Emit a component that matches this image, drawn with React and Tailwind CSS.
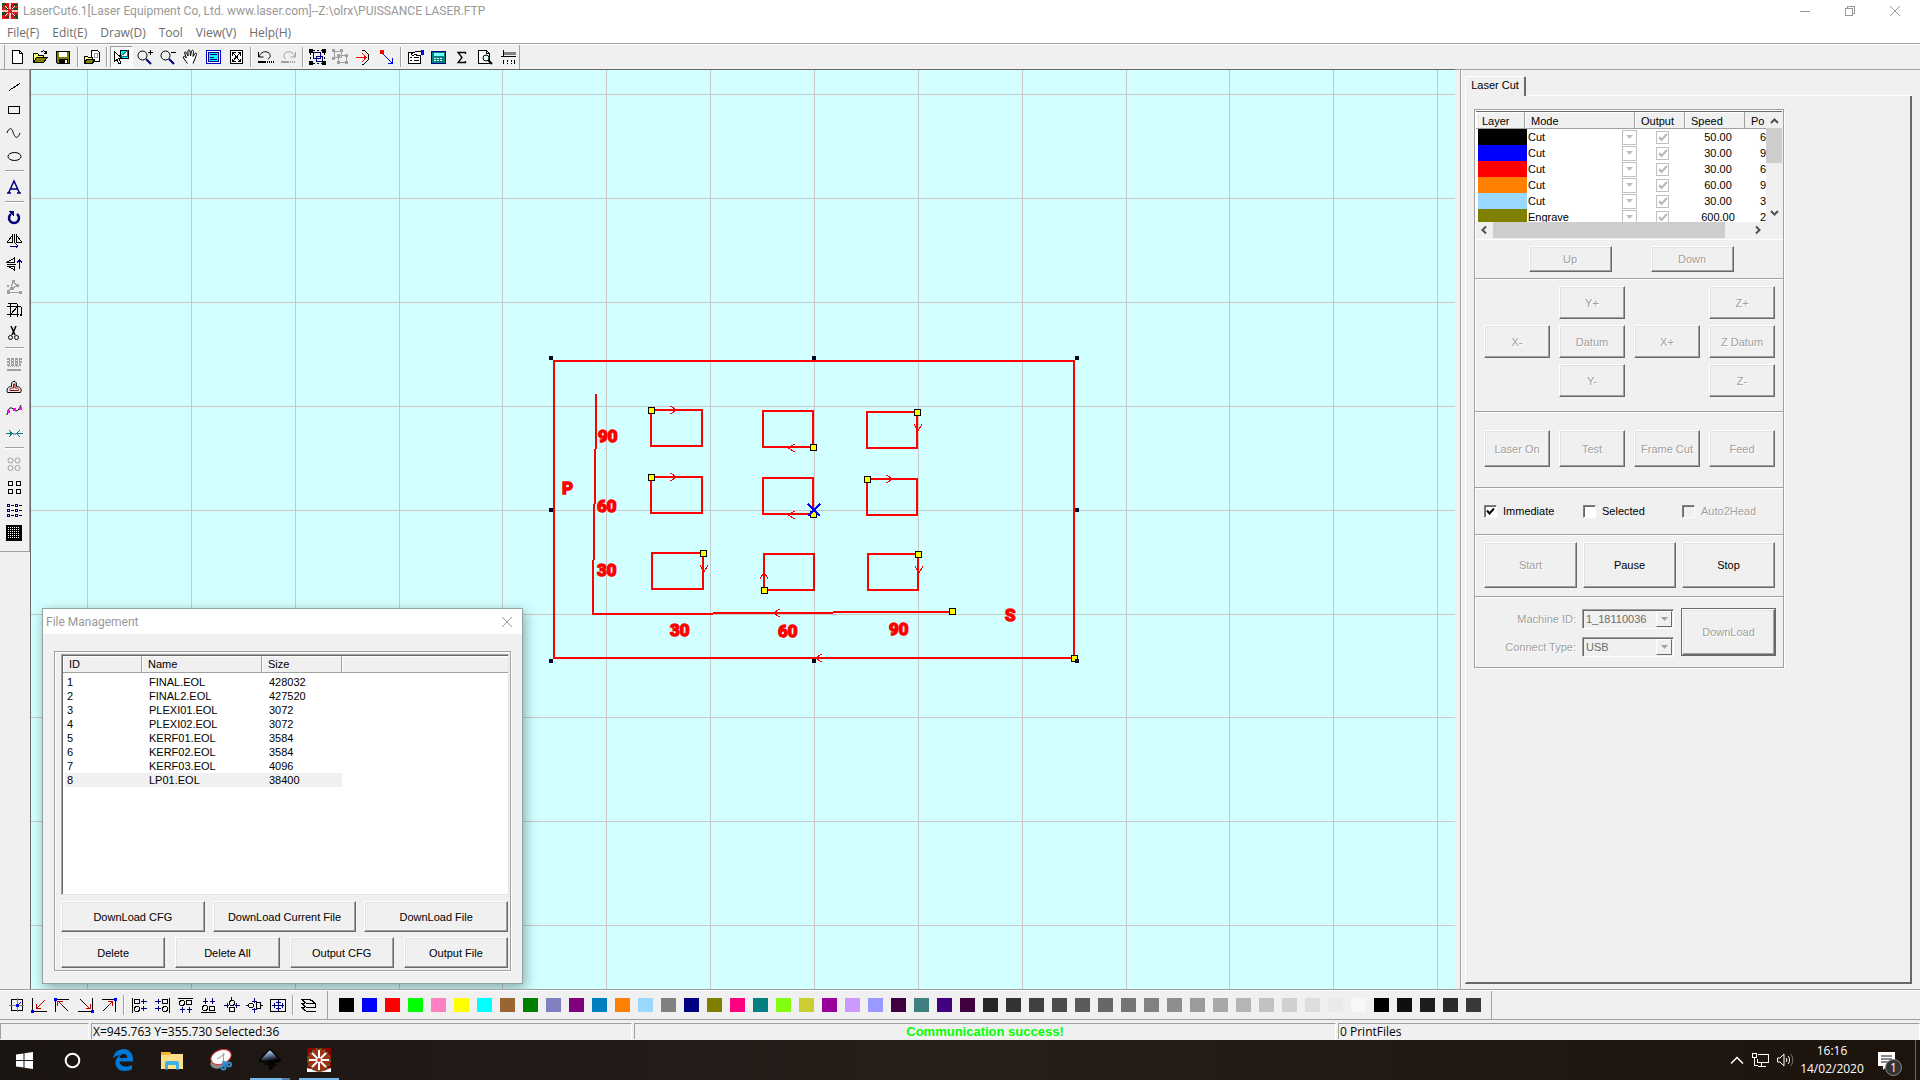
import React, { useState } from "react";

const NAVY = "#000080";
const GREY = "#a0a0a0";

const UI = "font-['Open_Sans','Noto_Sans',sans-serif]";
const CAPTION = "font-[Roboto,'Open_Sans',sans-serif]";
const BTN =
  "flex items-center justify-center border border-t-white border-l-white border-r-[#696969] border-b-[#696969] bg-[#f0f0f0] shadow-[inset_-1px_-1px_#a0a0a0,inset_1px_1px_#e3e3e3] disabled:text-[#a0a0a0] disabled:text-shadow-[1px_1px_#fff]";

function Icon({ children, w = 17, h = 16 }) {
  return (
    <svg width={w} height={h} viewBox={`0 0 ${w} ${h}`} fill="none" stroke="#000" shapeRendering="crispEdges" aria-hidden="true">
      {children}
    </svg>
  );
}

const GLASS = (
  <>
    <circle cx="6.500" cy="6.500" r="4.500" shapeRendering="auto" />
    <path d="M10 10l5 5" stroke={NAVY} strokeWidth="2" shapeRendering="auto" />
  </>
);

const FOLDER = (
  <>
    <path d="M1.500 13.500v-9h4l1 1.500h5v2" fill="#ffff66" />
    <path d="M1.500 13.500l3-5.500h11l-4 5.500z" fill="#808000" />
  </>
);

const FILE_TOOLS = [
  ["New", <path d="M3.500 1.500h7l3 3v10h-10zM10.500 1.500v3h3" fill="#fff" />],
  ["Open", <>{FOLDER}<path d="M9 3c2-2 4-1 5 1M14.500 1.500v3h-3" /></>],
  ["Save", <><path d="M1.500 2.500h13v12h-12l-1-1z" fill="#808000" /><path d="M4 3h8v5H4z" fill="#fff" stroke="none" /><path d="M4 10h9v4H4z" fill="#000" stroke="none" /><path d="M10 11h2v3h-2z" fill="#fff" stroke="none" /></>],
  null,
  ["Import", <><path d="M7.500 1.500h6l2 2v9h-8z" fill="#fff" /><rect x="10.500" y="4.500" width="3" height="4" stroke={GREY} /><path d="M.5 14.500v-7h3l1 1h4v2" fill="#ffff66" /><path d="M.5 14.500l2-4h8l-2 4z" fill="#808000" /></>],
  null,
  ["Pick", <><path d="M7.500 1.500h8v8h-8z" fill="#00ffff" /><path d="M8 7l6-5v5z" fill="#fff" stroke="#008080" /><path d="M1.500 2.500v10l2.500-2 2 4.500 2-1-2-4.500h3z" fill="#fff" /></>],
  ["Zoom in", <>{GLASS}<path d="M14.500 1v5M12 3.500h5" /></>],
  ["Zoom out", <>{GLASS}<path d="M12 3.500h5" /></>],
  ["Pan", <path d="M5.500 14.500l-4-5.500c-1-2 1-2 2-1l1 1-2-5c0-1.500 1.500-1.500 2 0l1.500 3v-5c0-1.500 2-1.500 2 0l.5 5 1-5c.5-1 2-1 2 .5l-.5 5 2-3c1-1 2 0 1.500 1l-2 5.500-1.500 3.500" fill="#fff" shapeRendering="auto" />],
  ["Table view", <><rect x="1.500" y="1.500" width="14" height="13" fill="#fff" stroke="#0000c0" /><rect x="3.500" y="3.500" width="10" height="9" fill="#00ffff" stroke={NAVY} /><path d="M5 5.500h7M5 8.500h4M5 10.500h7" stroke={NAVY} /></>],
  ["Fit to page", <><rect x="2.500" y="1.500" width="12" height="13" fill="#fff" /><path d="M5 4l7 8M12 4l-7 8M4.500 6.500v-3h3M9.500 3.500h3v3M4.500 9.500v3h3M12.500 9.500v3h-3" /></>],
  null,
  ["Undo", <><path d="M1.500 3v5h5M2 8c1-4 5-6 8-5 4 1 4 6 1 7" shapeRendering="auto" /><path d="M1 13h8" strokeWidth="2" /><path d="M10 13h7" strokeWidth="2" strokeDasharray="1 1" /></>],
  ["Redo", <g stroke={GREY}><path d="M15.500 3v5h-5M15 8c-1-4-5-6-8-5-4 1-4 6-1 7" shapeRendering="auto" /><path d="M1 13h8" strokeWidth="2" /><path d="M10 13h6" strokeWidth="2" strokeDasharray="1 1" /></g>],
  null,
  ["Group", <><path d="M4.500 3.500h7v6h-7zM7.500 7.500h6v5h-6z" stroke={NAVY} /><path d="M4 1.500h9M15.500 4v8M4 14.500h9M1.500 4v8" strokeDasharray="2 2" /><path d="M0 0h4v4H0zM13 0h4v4h-4zM0 12h4v4H0zM13 12h4v4h-4z" fill="#000" stroke="none" /></>],
  ["Ungroup", <><path d="M2.500 2.500h7v6h-7zM6.500 6.500h8v7h-8z" stroke={GREY} /><path d="M0 0h3v3H0zM8 0h3v3H8zM0 8h3v3H0zM5 5h3v3H5zM13 5h3v3h-3zM5 12h3v3H5zM13 12h3v3h-3z" fill={GREY} stroke="none" /></>],
  ["Direction", <><path d="M7 1h2l4 4v6l-4 4H7" /><path d="M1 8.500h10M7 4l4 4.500L7 13" stroke="#f00" /></>],
  ["Start point", <><path d="M2 1h4v4H2z" fill="#f00" stroke="none" /><path d="M5 5l9 9M14.500 9v5h-5" stroke="#00f" /></>],
  null,
  ["Properties", <><path d="M1.500 3.500h12v11h-12z" fill="#fff" /><path d="M3 8.500h2M7 8.500h5M3 11.500h2M7 11.500h5" /><path d="M4 5l6-3 4 1v3l-3 1-3-2-2 2z" fill="#fff" /><path d="M14 1h3v5h-3z" fill="#00f" stroke="none" /></>],
  ["Calculator", <><rect x="1.500" y="2.500" width="14" height="12" rx="1" fill="#008080" stroke={NAVY} /><path d="M4 4h10v3H4z" fill="#7ff" stroke="none" /><path d="M4 9.500h9M4 11.500h9" stroke="#fff" strokeDasharray="2 1" /></>],
  ["Sum", <path d="M12.500 5V3.500H5l4 5-4 5h7.500V12" strokeWidth="1.300" shapeRendering="auto" />],
  ["Preview", <><path d="M2.500 1.500h8l3 3v10h-11z" fill="#fff" /><path d="M10.500 1.500v3h3" /><circle cx="10" cy="9" r="3" fill="#dff" shapeRendering="auto" /><path d="M12 11l4 4" strokeWidth="2" shapeRendering="auto" /></>],
  ["Plotter", <><path d="M4 3h13v3H4z" fill="#808080" stroke="none" /><path d="M4.500 1v7M2 7.500h15" /><path d="M4.500 11v4M8.500 11v2M8.500 14v1M12.500 11v2M12.500 14v1M15.500 11v4" /></>],
];

const DRAW_TOOLS = [
  ["Line", <path d="M3 11.500l11-7" />],
  ["Rectangle", <rect x="2.500" y="4.500" width="11" height="7" />],
  ["Curve", <path d="M1 8c2-6 5-5 6-1s4 9 7 1" shapeRendering="auto" />],
  ["Ellipse", <ellipse cx="8.500" cy="8.500" rx="6.500" ry="4" shapeRendering="auto" />],
  null,
  ["Text", <path d="M2.500 14L8 2l5.500 12M4.500 10h7M1 14h4M11 14h4" stroke={NAVY} strokeWidth="1.500" shapeRendering="auto" />],
  null,
  ["Rotate", <><path d="M11 4a5 5 0 1 1-6 0" stroke={NAVY} strokeWidth="2.500" shapeRendering="auto" /><path d="M2 1h6v6z" fill={NAVY} stroke="none" /></>],
  ["Mirror horizontal", <><path d="M6.500 2v7h-5zM10.500 2v7h5zM8.500 1v9" /><path d="M4 13h8M9.500 10.500L12 13l-2.500 2.500" stroke={NAVY} /></>],
  ["Mirror vertical", <><path d="M8.500 2v4h-7zM8.500 14v-4h-7zM1 8.500h9" /><path d="M13.500 13V4M11 6.500L13.500 4 16 6.500" stroke={NAVY} /></>],
  ["Edit nodes", <><path d="M3 13.500h12M3 13l4-10M7 3l4 3-5 4" stroke={GREY} /><path d="M1 11h3v4H1zM6 1h3v3H6zM10 5h3v3h-3zM13 12h3v3h-3zM5 8h3v3H5zM1 6h2v2H1z" fill={GREY} stroke="none" /></>],
  ["Size", <><rect x="4.500" y="4.500" width="7" height="8" /><path d="M1 4.500h14M4.500 1v14M11.500 2v13M1 12.500h12M5 12l7-8M2 1.500h9M15.500 5v9M14 12l1.500 2" /></>],
  ["Cut", <><path d="M5 1l4 9M10 1L6 10" strokeWidth="1.500" shapeRendering="auto" /><circle cx="4.500" cy="12.500" r="2" shapeRendering="auto" /><circle cx="10.500" cy="12.500" r="2" shapeRendering="auto" /></>],
  null,
  ["Fill", <><path d="M1 3h15M1 6h15M1 9h14" stroke={GREY} strokeWidth="2" strokeDasharray="3 1" /><path d="M3 4.500h12M3 7.500h12M2 10.500h12" stroke={GREY} strokeDasharray="1 1" /><path d="M1 14h14" stroke={GREY} strokeWidth="2" /></>],
  ["Offset", <g shapeRendering="auto"><path d="M1.500 13.500c-1.500-4 1-6 4-6-1-7 6-7 5 0 3 0 6 2 4 6z" /><path d="M4 11.500c-1-2 1-2.500 3.500-2.500V5h1.500v4c2.500 0 4.500.5 3.500 2.500z" stroke="#a00000" /></g>],
  ["Smooth", <><path d="M1 13c1-6 3-9 6-6s5 3 8-4" shapeRendering="auto" /><path d="M1 8h3v3H1zM7 6h3v3H7zM13 5h3v3h-3z" fill="#f0f" stroke="none" /></>],
  ["Join", <g stroke="#008080"><path d="M0 8.500h6M3 5l3 3.500L3 12M11 8.500h6M14 5l-3 3.500 3 3.500" /><path d="M7 8.500h3" stroke={GREY} strokeWidth="2" /></g>],
  null,
  ["Array circle", <g stroke={GREY} shapeRendering="auto"><circle cx="4.500" cy="4.500" r="2.500" /><circle cx="11.500" cy="4.500" r="2.500" /><circle cx="4.500" cy="12" r="2.500" /><circle cx="11.500" cy="12" r="2.500" /></g>],
  ["Array", <path d="M2.500 2.500h4v4h-4zM10.500 2.500h4v4h-4zM2.500 10.500h4v4h-4zM10.500 10.500h4v4h-4z" />],
  ["List", <><path d="M1.500 2.500h2v2h-2zM9.500 2.500h2v2h-2zM1.500 7.500h2v2h-2zM9.500 7.500h2v2h-2zM1.500 12.500h2v2h-2zM9.500 12.500h2v2h-2z" stroke={NAVY} /><path d="M5 3.500h3M13 3.500h3M5 8.500h3M13 8.500h3M5 13.500h3M13 13.500h3" /></>],
  ["Grid", <><path d="M0 0h16v16H0z" fill="#000" stroke="none" /><path d="M2 2.500h12M2 4.500h12M2 6.500h12M2 8.500h12M2 10.500h12M2 12.500h12" stroke="#fff" strokeDasharray="1 1" /></>],
];

const ALIGN_TOOLS = [
  ["Page centre", <><path d="M3.500 2.500h11v11h-11z" /><path d="M1 8.500h15M9.500 1v14" stroke="#808080" /><path d="M9 9l4-4" stroke="#00f" /><path d="M8 7h3v3H8z" fill="#00f" stroke="none" /></>],
  ["Bottom left", <><path d="M1.500 1v13.500H16" /><path d="M14 3L6 11M5.500 7v4.500H10" stroke="#c00000" /><path d="M0 13h3v3H0z" fill="#00f" stroke="none" /></>],
  ["Top left", <><path d="M1.500 15V2.500H15M6 6l8 8" /><path d="M4 4l4 4M3.500 9V4.500H9" stroke="#c00000" /><path d="M0 1h3v3H0z" fill="#00f" stroke="none" /></>],
  ["Bottom right", <><path d="M15.500 1v13.500H1M3 2l9 9" /><path d="M9 8l4 4M13.500 7v4.500H9" stroke="#c00000" /><path d="M14 13h3v3h-3z" fill="#00f" stroke="none" /></>],
  ["Top right", <><path d="M15.500 15V2.500H2M3 14l9-9" /><path d="M9 8l4-4M8 4.500h4.500V9" stroke="#c00000" /><path d="M14 1h3v3h-3z" fill="#00f" stroke="none" /></>],
  null,
  ["Align left", <><path d="M1.500 1v15M3.500 2.500h5v4h-5z" /><circle cx="6" cy="12" r="2.500" /><path d="M10 4.500h6M10 11.500h6M12.500 2v5M12.500 9v5" stroke={NAVY} /></>],
  ["Align right", <><path d="M15.500 1v15M8.500 2.500h5v4h-5z" /><circle cx="11" cy="12" r="2.500" /><path d="M1 4.500h6M1 11.500h6M4.500 2v5M4.500 9v5" stroke={NAVY} /></>],
  ["Align top", <><path d="M1 1.500h15M9.500 3.500h5v4h-5z" /><circle cx="5" cy="6" r="2.500" /><path d="M5.500 10v6M12.500 10v6M3 12.500h5M10 12.500h5" stroke={NAVY} /></>],
  ["Align bottom", <><path d="M1 15.500h15M9.500 9.500h5v4h-5z" /><circle cx="5" cy="11" r="2.500" /><path d="M5.500 1v6M12.500 1v6M3 4.500h5M10 4.500h5" stroke={NAVY} /></>],
  ["Centre vertical", <><path d="M6.500 10.500h5v4h-5zM8.500 0v3" /><circle cx="9" cy="6" r="2.500" /><path d="M1 8.500h5M12 8.500h5M4 6v5M13.500 6v5" stroke={NAVY} /></>],
  ["Centre horizontal", <><path d="M10.500 5.500h4v6h-4zM15 8.500h2M0 8.500h2" /><circle cx="5" cy="8.500" r="2.500" /><path d="M8.500 1v5M8.500 11v5M6 4.500h5M6 12.500h5" stroke={NAVY} /></>],
  ["Centre both", <><path d="M1.500 2.500h15v12h-15z" /><path d="M3 8.500h12M9.500 3v11M5 6v5M13.500 6v5M7 5.500h5M7 11.500h5" stroke={NAVY} /></>],
  null,
  ["Layers", <path d="M1.500 2.500h9l5 4h-9zM1.500 6.500l5 4h9M1.500 10.500l5 4h9M1.500 6.500h3M1.500 10.500h3M15.500 7v4M10 2.500l5 4" />],
];

const PALETTE = [
  "#000000", "#0000ff", "#ff0000", "#00ff00", "#ff80c0", "#ffff00", "#00ffff", "#996633", "#008000", "#8080c0",
  "#800080", "#0080c0", "#ff8000", "#99d9ff", "#808080", "#000080", "#808000", "#ff0080", "#008080", "#80ff11",
  "#cccc33", "#990099", "#cc99ff", "#9999ff", "#400040", "#408080", "#400080", "#400040", "#262626", "#333333",
  "#404040", "#4d4d4d", "#5a5a5a", "#676767", "#747474", "#818181", "#8e8e8e", "#9b9b9b", "#a8a8a8", "#b5b5b5",
  "#c2c2c2", "#d0d0d0", "#dddddd", "#eaeaea", "#f7f7f7", "#000000", "#0f0f0f", "#1d1d1d", "#2b2b2b", "#393939",
];

const LAYERS = [
  { color: "#000000", mode: "Cut", speed: "50.00", power: "6" },
  { color: "#0000ff", mode: "Cut", speed: "30.00", power: "9" },
  { color: "#ff0000", mode: "Cut", speed: "30.00", power: "6" },
  { color: "#ff8000", mode: "Cut", speed: "60.00", power: "9" },
  { color: "#99d9ff", mode: "Cut", speed: "30.00", power: "3" },
  { color: "#808000", mode: "Engrave", speed: "600.00", power: "2" },
];

const FILES = [
  ["FINAL.EOL", "428032"],
  ["FINAL2.EOL", "427520"],
  ["PLEXI01.EOL", "3072"],
  ["PLEXI02.EOL", "3072"],
  ["KERF01.EOL", "3584"],
  ["KERF02.EOL", "3584"],
  ["KERF03.EOL", "4096"],
  ["LP01.EOL", "38400"],
];

// x, y, width, height, start marker, arrow tip, arrow direction
const BOXES = [
  { x: 651, y: 410, w: 51, h: 36, start: [651, 410], tip: [677, 410], dir: 0 },
  { x: 763, y: 411, w: 50, h: 36, start: [813, 447], tip: [788, 448], dir: 180 },
  { x: 867, y: 412, w: 50, h: 36, start: [917, 412], tip: [918, 431], dir: 90 },
  { x: 651, y: 477, w: 51, h: 36, start: [651, 477], tip: [677, 477], dir: 0 },
  { x: 763, y: 478, w: 50, h: 36, start: [813, 514], tip: [788, 515], dir: 180 },
  { x: 867, y: 479, w: 50, h: 36, start: [867, 479], tip: [893, 479], dir: 0 },
  { x: 652, y: 553, w: 51, h: 36, start: [703, 553], tip: [704, 572], dir: 90 },
  { x: 764, y: 554, w: 50, h: 36, start: [764, 590], tip: [764, 572], dir: 270 },
  { x: 868, y: 554, w: 50, h: 36, start: [918, 554], tip: [919, 573], dir: 90 },
];

const LABELS = [
  ["90", 598, 442], ["60", 597, 512], ["30", 597, 576], ["P", 562, 494],
  ["30", 670, 636], ["60", 778, 637], ["90", 889, 635], ["S", 1005, 621],
];

const HANDLES = [
  [551, 358], [814, 358], [1077, 358], [551, 510], [1077, 510], [551, 661], [814, 661], [1077, 661],
];

const Arrow = ({ x, y, dir }) => (
  <path d="M-7-4L0 0L-7 4" strokeWidth="1" transform={`translate(${x} ${y}) rotate(${dir})`} />
);

const Marker = ({ x, y }) => (
  <rect x={x - 2.5} y={y - 2.5} width="6" height="6" fill="#ff0" stroke="#000" strokeWidth="1" />
);

function Drawing() {
  const lines = Array.from({ length: 30 }, (_, i) => i);
  return (
    <svg className="absolute inset-0 h-full w-full" fill="none" shapeRendering="crispEdges" role="img" aria-label="Drawing">
      <g transform="translate(-31 -70)">
        <g stroke="#c8c8c8">
          {lines.map((i) => (
            <path key={i} d={`M${Math.round(87 + i * 103.85) + 0.5} 0v4000M0 ${Math.round(94 + i * 103.9) + 0.5}h4000`} />
          ))}
        </g>
        <g stroke="#f00" strokeWidth="2">
          <rect x="554" y="361" width="520" height="297" />
          <path d="M596 394v55M595 449v55M594 504v56M593 560v54M592 614h121M713 613h120M833 612h119" />
          {BOXES.map((b, i) => (
            <g key={i}>
              <rect x={b.x} y={b.y} width={b.w} height={b.h} />
              <Arrow x={b.tip[0]} y={b.tip[1]} dir={b.dir} />
            </g>
          ))}
          <Arrow x={773} y={613} dir={180} />
          <Arrow x={815} y={658} dir={180} />
        </g>
        {BOXES.map((b, i) => (
          <Marker key={i} x={b.start[0]} y={b.start[1]} />
        ))}
        <Marker x={952} y={611} />
        <Marker x={1074} y={658} />
        {HANDLES.map(([x, y]) => (
          <rect key={`${x}-${y}`} x={x - 2} y={y - 2} width="4" height="4" fill="#000020" />
        ))}
        <path d="M808 504l12 12M820 504l-12 12" stroke="#00f" strokeWidth="2" />
        <g className="font-[Roboto,'Liberation_Sans',sans-serif] text-[17px] font-bold" fill="#f00" stroke="#f00" strokeWidth="1.500">
          {LABELS.map(([t, x, y], i) => (
            <text key={i} x={x} y={y}>{t}</text>
          ))}
        </g>
      </g>
    </svg>
  );
}

function ToolRow({ tools, pressed, sep = "mx-[2px]" }) {
  return tools.map((t, i) =>
    t ? (
      <button
        key={i}
        aria-label={t[0]}
        className={`flex h-[22px] w-[23px] items-center justify-center ${
          t[0] === pressed ? "border border-t-[#a0a0a0] border-l-[#a0a0a0] border-r-white border-b-white bg-[#f8f8f8]" : ""
        }`}
      >
        <Icon>{t[1]}</Icon>
      </button>
    ) : (
      <span key={i} className={`h-5 w-[2px] border-l border-[#a0a0a0] bg-white ${sep}`} />
    )
  );
}

function Chevron({ d }) {
  return (
    <svg width="17" height="16" viewBox="0 0 17 16" fill="none" stroke="#505050" strokeWidth="2" aria-hidden="true">
      <path d={d} />
    </svg>
  );
}

function LayerTable() {
  const th = "border-r border-b border-[#a0a0a0] pt-[2px] pl-[6px] text-left font-normal shadow-[inset_1px_1px_#fff]";
  return (
    <div className="border-t border-[#696969] bg-[#f0f0f0]">
      <div className="flex h-[110px]">
        <div className="flex-1 overflow-hidden bg-white">
          <table className="w-full table-fixed border-separate border-spacing-0">
            <colgroup>
              <col className="w-[49px]" />
              <col className="w-[110px]" />
              <col className="w-[50px]" />
              <col className="w-[60px]" />
              <col />
            </colgroup>
            <thead>
              <tr className="h-[17px] bg-[#f0f0f0] leading-[14px]">
                {["Layer", "Mode", "Output", "Speed"].map((h) => (
                  <th key={h} className={th}>{h}</th>
                ))}
                <th className="overflow-hidden border-b border-[#a0a0a0] pt-[2px] pl-[6px] text-left font-normal">Po</th>
              </tr>
            </thead>
            <tbody>
              {LAYERS.map((l, i) => (
                <tr key={i} className="h-4 leading-[15px]">
                  <td className="p-0 pl-[2px]">
                    <div className="-mr-[2px] h-4" style={{ background: l.color }} />
                  </td>
                  <td className="p-0 pl-[3px]">
                    <div className="-mr-[2px] flex h-4 items-center">
                      <select disabled aria-label={`Mode of layer ${i + 1}`} className="min-w-0 flex-1 appearance-none bg-transparent text-black opacity-100">
                        <option>{l.mode}</option>
                      </select>
                      <span className="flex h-[15px] w-[15px] items-center justify-center border border-[#c0c0c0]">
                        <svg width="7" height="4" viewBox="0 0 7 4" fill="#c0c0c0"><path d="M0 0h7L3.500 4z" /></svg>
                      </span>
                    </div>
                  </td>
                  <td className="p-0 pl-1">
                    <label className="mx-auto grid h-[13px] w-[13px]">
                      <input type="checkbox" disabled defaultChecked aria-label={`Output layer ${i + 1}`} className="[grid-area:1/1] appearance-none border border-[#c0c0c0]" />
                      <svg className="[grid-area:1/1]" width="13" height="13" viewBox="0 0 13 13" fill="none" stroke="#b8b8b8" strokeWidth="2"><path d="M3 6l2.500 3L11 3" /></svg>
                    </label>
                  </td>
                  <td className="p-0 pl-[6px] text-center">{l.speed}</td>
                  <td className="p-0 text-right">{l.power}</td>
                </tr>
              ))}
            </tbody>
          </table>
        </div>
        <div className="flex w-4 flex-col">
          <Chevron d="M5 11l3.500-3.500L12 11" />
          <div className="h-[35px] bg-[#cdcdcd]" />
          <div className="flex-1" />
          <Chevron d="M5 5l3.500 3.500L12 5" />
        </div>
      </div>
      <div className="flex h-4">
        <Chevron d="M10 4.500L6.500 8l3.500 3.500" />
        <div className="w-[232px] bg-[#cdcdcd]" />
        <div className="flex-1" />
        <Chevron d="M7 4.500L10.500 8 7 11.500" />
        <div className="w-4" />
      </div>
    </div>
  );
}

function Check({ label, checked, disabled }) {
  const [on, setOn] = useState(checked);
  return (
    <label className={`flex w-[99px] items-center gap-[6px] ${disabled ? "text-[#a0a0a0] text-shadow-[1px_1px_#fff]" : ""}`}>
      <span className="grid h-[13px] w-[13px]">
        <input
          type="checkbox"
          checked={on}
          disabled={disabled}
          onChange={() => setOn(!on)}
          className="[grid-area:1/1] appearance-none border border-t-[#808080] border-l-[#808080] border-r-white border-b-white bg-white shadow-[inset_1px_1px_#696969] disabled:bg-[#f0f0f0]"
        />
        {on && (
          <svg className="pointer-events-none [grid-area:1/1]" width="13" height="13" viewBox="0 0 13 13" fill="none" stroke="#000" strokeWidth="2"><path d="M3 5.500l2.500 3L10 3.500" /></svg>
        )}
      </span>
      {label}
    </label>
  );
}

function Combo({ id, label, value }) {
  return (
    <div className="flex items-center justify-end gap-[6px]">
      <label htmlFor={id} className="text-[#a0a0a0] text-shadow-[1px_1px_#fff]">{label}</label>
      <div className="flex h-5 w-[92px] border border-t-[#a0a0a0] border-l-[#a0a0a0] border-r-white border-b-white p-px shadow-[inset_1px_1px_#696969]">
        <select id={id} disabled className="min-w-0 flex-1 appearance-none pl-[2px] text-[11px] leading-4 text-[#6d6d6d] opacity-100">
          <option>{value}</option>
        </select>
        <span className="flex w-4 items-center justify-center border border-t-white border-l-white border-r-[#696969] border-b-[#696969]">
          <svg width="7" height="4" viewBox="0 0 7 4" fill="#a0a0a0"><path d="M0 0h7L3.500 4z" /></svg>
        </span>
      </div>
    </div>
  );
}

const SECTION = "border-b border-[#a0a0a0] shadow-[inset_0_1px_#fff]";
const JOG = ["", "Y+", "", "Z+", "X-", "Datum", "X+", "Z Datum", "", "Y-", "", "Z-"];

function SidePanel() {
  return (
    <aside className="flex w-[465px] shrink-0 flex-col border-t border-[#a0a0a0] pl-[5px]">
      <div className="flex flex-1 flex-col border-l border-[#a0a0a0] pt-[6px] pr-2 pb-[5px] pl-1 shadow-[inset_1px_0_#fff]">
        <div role="tablist" className="flex">
          <button role="tab" aria-selected="true" className="h-5 w-[61px] rounded-t-[2px] border-t border-r-2 border-l border-t-white border-r-[#696969] border-l-white pb-1">
            Laser Cut
          </button>
          <div className="flex-1 border-b border-white" />
        </div>
        <div className="flex-1 border-r-2 border-b-2 border-l border-l-white border-r-[#696969] border-b-[#696969] pt-[13px] pl-2">
          <div className="w-[310px] border border-[#a0a0a0] shadow-[1px_1px_#fff,inset_1px_1px_#fff]">
            <div className={SECTION}>
              <div className="px-px pt-px"><LayerTable /></div>
              <div className="mt-px flex justify-center gap-[39px] border-t border-white pt-[6px] pr-[20px] pb-[6px] pl-6">
                <button disabled className={`h-[26px] w-[83px] ${BTN}`}>Up</button>
                <button disabled className={`h-[26px] w-[83px] ${BTN}`}>Down</button>
              </div>
            </div>
            <div className={`grid grid-cols-4 gap-x-[9px] gap-y-[6px] pt-[7px] pr-2 pb-[14px] pl-[9px] ${SECTION}`}>
              {JOG.map((t, i) =>
                t ? <button key={i} disabled className={`h-[33px] ${BTN}`}>{t}</button> : <span key={i} />
              )}
            </div>
            <div className={`grid grid-cols-4 gap-[9px] pt-[18px] pr-2 pb-5 pl-[9px] ${SECTION}`}>
              {["Laser On", "Test", "Frame Cut", "Feed"].map((t) => (
                <button key={t} disabled className={`h-[37px] ${BTN}`}>{t}</button>
              ))}
            </div>
            <div className={`flex h-[47px] items-center pl-[9px] ${SECTION}`}>
              <Check label="Immediate" checked />
              <Check label="Selected" checked={false} />
              <Check label="Auto2Head" checked={false} disabled />
            </div>
            <div className={`grid grid-cols-3 gap-[6px] pt-[7px] pr-2 pb-2 pl-[9px] ${SECTION}`}>
              <button disabled className={`h-[46px] ${BTN}`}>Start</button>
              <button className={`h-[46px] ${BTN}`}>Pause</button>
              <button className={`h-[46px] ${BTN}`}>Stop</button>
            </div>
            <div className="flex gap-2 px-2 pt-3 pb-[10px] shadow-[inset_0_1px_#fff]">
              <div className="flex flex-1 flex-col gap-2">
                <Combo id="machine" label="Machine ID:" value="1_18110036" />
                <Combo id="connect" label="Connect Type:" value="USB" />
              </div>
              <button disabled className={`h-[46px] w-[93px] outline outline-[#696969] ${BTN}`}>DownLoad</button>
            </div>
          </div>
        </div>
      </div>
    </aside>
  );
}

function FileDialog() {
  const th = "border-r border-b border-[#a0a0a0] pl-[6px] text-left font-normal shadow-[inset_1px_1px_#fff]";
  return (
    <section className="absolute bottom-[5px] left-[11px] w-[481px] border border-[#8fa5a5] bg-[#f0f0f0] shadow-[2px_4px_12px_rgba(0,0,0,0.35)]">
      <header className={`flex h-[25px] items-center justify-between bg-white pr-[9px] pl-[3px] text-[12px] text-[#999] ${CAPTION}`}>
        <h2>File Management</h2>
        <button aria-label="Close">
          <svg width="12" height="12" viewBox="0 0 12 12" stroke="#999"><path d="M1 1l10 10M11 1L1 11" /></svg>
        </button>
      </header>
      <div className="mx-[11px] mt-[17px] mb-3 border border-[#a0a0a0] pt-[2px] pr-[2px] pb-[2px] pl-[6px] shadow-[1px_1px_#fff,inset_1px_1px_#fff]">
        <div className="-mr-px h-[241px] border border-t-[#a0a0a0] border-l-[#a0a0a0] border-r-[#e3e3e3] border-b-[#e3e3e3] bg-white pt-px pl-px shadow-[inset_1px_1px_#696969]">
          <table className="w-full table-fixed border-separate border-spacing-0">
            <colgroup>
              <col className="w-[79px]" />
              <col className="w-[120px]" />
              <col className="w-[80px]" />
              <col />
            </colgroup>
            <thead>
              <tr className="h-[17px] bg-[#f0f0f0] leading-4">
                <th className={th}>ID</th>
                <th className={th}>Name</th>
                <th className={th}>Size</th>
                <td className="border-b border-[#a0a0a0] shadow-[inset_1px_1px_#fff]" />
              </tr>
            </thead>
            <tbody className="before:block before:h-[2px]">
              {FILES.map(([name, size], i) => {
                const bg = i === 7 ? "bg-[#f0f0f0]" : "";
                return (
                  <tr key={name} className="h-[14px] leading-[14px]">
                    <td className={`border-l-2 border-white p-0 pl-[2px] ${bg}`}>{i + 1}</td>
                    <td className={`p-0 pl-[7px] ${bg}`}>{name}</td>
                    <td className={`p-0 pl-[7px] ${bg}`}>{size}</td>
                    <td className="p-0" />
                  </tr>
                );
              })}
            </tbody>
          </table>
        </div>
        <div className="mt-[6px] grid grid-cols-3 gap-2">
          {["DownLoad CFG", "DownLoad Current File", "DownLoad File"].map((t) => (
            <button key={t} className={`h-[31px] ${BTN}`}>{t}</button>
          ))}
        </div>
        <div className="mt-[5px] grid grid-cols-4 gap-[10px]">
          {["Delete", "Delete All", "Output CFG", "Output File"].map((t) => (
            <button key={t} className={`h-[31px] ${BTN}`}>{t}</button>
          ))}
        </div>
      </div>
    </section>
  );
}

function RosetteIcon() {
  return (
    <svg width="24" height="24" viewBox="0 0 24 24" fill="none" aria-hidden="true">
      <path d="M0 0h24v24H0z" fill="#8b0000" />
      <circle cx="12" cy="12" r="11" fill="#a03018" stroke="#5a6e20" strokeDasharray="2 2" strokeWidth="2" />
      <path d="M0 20l4 1 4 2 4 1 5-1 4-2 3-1v4H0z" fill="#fff" />
      <path d="M12 2v20M2 12h20M5 5l14 14M19 5L5 19" stroke="#fff" strokeWidth="2" />
      <circle cx="12" cy="12" r="2" fill="#c33" />
    </svg>
  );
}

function Taskbar() {
  const item = "flex h-full w-[49px] items-center justify-center";
  return (
    <footer className={`flex h-10 items-center bg-linear-to-r from-[#1b1512] via-[#271e1a] to-[#1c130c] text-white ${UI}`}>
      <button className={item} aria-label="Start">
        <svg width="17" height="17" viewBox="0 0 17 17" fill="#fff"><path d="M0 2.500L7.500 1.500V8H0zM8.500 1.300L17 0v8H8.500zM0 9h7.500v6.500L0 14.500zM8.500 9H17v8l-8.500-1.300z" /></svg>
      </button>
      <button className={`${item} pr-[3px]`} aria-label="Cortana">
        <svg width="17" height="17" viewBox="0 0 17 17" fill="none" stroke="#fff" strokeWidth="2"><circle cx="8.500" cy="8.500" r="6.800" /></svg>
      </button>
      <button className={item} aria-label="Edge">
        <svg width="20" height="22" viewBox="0 0 20 22" fill="#0078d7">
          <path d="M0 9.500C1 3.500 5 0 10.500 0 16.500 0 20 4.500 20 10v2.500H6.500c.2 3.500 3.500 5 6.500 5 2.500 0 4.500-.7 6-1.500v4.300c-2 1.100-4.300 1.700-7 1.700C6 22 2.500 18.500 2.500 13.500 2.500 10 4.500 7.500 7.500 6 4.500 6.300 1.500 7.500 0 9.500zM6.500 9h7.700c0-2.500-1.200-4-3.600-4-2.300 0-3.700 1.700-4.100 4z" />
        </svg>
      </button>
      <button className={item} aria-label="Explorer">
        <svg width="22" height="19" viewBox="0 0 22 19"><path d="M0 1h9l1 2h12v15H0z" fill="#ffe08a" /><path d="M0 1h9l1 2-1 1H0z" fill="#f0b429" /><path d="M4 18.500V11l2-1h10l2 1v7.500h-3V14H7v4.500z" fill="#3fb0e8" /></svg>
      </button>
      <button className={item} aria-label="Snipping Tool">
        <svg width="24" height="24" viewBox="0 0 24 24" fill="none">
          <ellipse cx="10" cy="14" rx="9" ry="6" transform="rotate(-25 10 14)" fill="#8a8a8a" />
          <ellipse cx="12" cy="9" rx="10.500" ry="7" transform="rotate(-20 12 9)" fill="#fff" stroke="#d33" />
          <path d="M8 11l8-5M14 5l1 12" stroke="#999" />
          <g stroke="#2f8fd0" strokeWidth="2"><circle cx="14.500" cy="19.500" r="2" /><circle cx="20" cy="16.500" r="2" /><path d="M15 17l-1-4M18 16l-4-3" /></g>
        </svg>
      </button>
      <button className={`${item} relative`} aria-label="Inkscape">
        <svg width="22" height="22" viewBox="0 0 22 22">
          <defs><linearGradient id="ink" x1="0" y1="0" x2="0.300" y2="1"><stop offset="0" stopColor="#f5f8ff" /><stop offset="0.500" stopColor="#6c86a8" /><stop offset="1" stopColor="#050505" /></linearGradient></defs>
          <path d="M11 0c1.500 0 9 8 11 11 1 2-3 3-6 3l2 2c-2 1-3 1-4 3l-3 3-2-3 2-2-6-2 3-1.500c-4 0-9-.5-8-2.500C1.500 8 9.500 0 11 0z" fill="#050505" />
          <path d="M11 1.500c1 0 7 7 9 9.500-5 2-8-1-10 1-2 1-5 0-8-1 2-3 8-9.500 9-9.500z" fill="url(#ink)" />
        </svg>
        <span className="absolute bottom-0 left-[5px] h-[2px] w-8 bg-[#76b9ed]" />
        <span className="absolute right-[4px] bottom-0 h-[2px] w-2 bg-[#4f7fa6]" />
      </button>
      <button className={`${item} relative`} aria-label="LaserCut">
        <RosetteIcon />
        <span className="absolute bottom-0 left-[5px] h-[2px] w-10 bg-[#76b9ed]" />
      </button>
      <div className="flex-1" />
      <div className="flex items-center gap-[8px]">
        <svg width="14" height="9" viewBox="0 0 14 9" fill="none" stroke="#fff" strokeWidth="1.500"><path d="M1 7.500l6-6 6 6" /></svg>
        <svg width="17" height="16" viewBox="0 0 17 16" fill="none" stroke="#fff" shapeRendering="crispEdges"><path d="M6 2.500h10.500v8H5.500V7M9.500 11v3M6 14.500h8M.5 1.500h4v4h-4zM2.500 6v7h3" /></svg>
        <svg width="17" height="14" viewBox="0 0 17 14" fill="none" stroke="#fff"><path d="M.5 5h2.500l4-4v12l-4-4H.5zM9 5c1 1 1 3 0 4M11 3c2 2 2 6 0 8" /><path d="M13.500 1c3 3 3 9 0 12" stroke="#777" /></svg>
      </div>
      <div className="w-[76px] text-center text-[12px] leading-[18px]">
        <div>16:16</div>
        <div>14/02/2020</div>
      </div>
      <button className="relative ml-[8px] h-10 w-[37px]" aria-label="1 notification">
        <svg className="mt-[2px]" width="17" height="18" viewBox="0 0 17 18"><path d="M0 0h17v14H9l-4 4v-4H0z" fill="#fff" /><path d="M3 4h11M3 7h11M3 10h8" stroke="#1c130c" /></svg>
        <span className="absolute top-[19px] left-[7px] flex h-[17px] w-[17px] items-center justify-center rounded-full border border-[#8a8a8a] bg-[#333] text-[12px] leading-none">1</span>
      </button>
      <span className="h-full w-[5px] border-l border-[#6b645f]" />
    </footer>
  );
}

export default function App() {
  return (
    <div className="flex min-h-screen flex-col bg-[#f0f0f0] font-['Liberation_Sans',Arial,sans-serif] text-[11px] leading-[14px] text-black select-none">
      <header className={`bg-white text-[12px] leading-4 ${UI}`}>
        <div className={`flex h-[22px] items-center text-[#999] ${CAPTION}`}>
          <svg className="mr-[5px] ml-[2px]" width="16" height="16" viewBox="0 0 16 16" aria-hidden="true">
            <path d="M0 0h16v16H0z" fill="#d21a1a" />
            <path d="M0 0h4v2H1v2H0zM11 1h4v2h-4zM4 4h2v3H4zM12 5h4v2h-4zM0 9h4v3H0zM5 13h2v2H5zM12 12h4v4h-2v-2h-2zM9 2h1v3H9z" fill="#164c16" />
            <path d="M8 0v16M0 8h16" stroke="#fff" strokeWidth="1.500" />
            <path d="M3 3l3 3M13 3l-3 3M3 13l3-3M13 13l-3-3" stroke="#fff" />
            <circle cx="8" cy="8" r="2" fill="#d21a1a" />
          </svg>
          <h1 className="flex-1">LaserCut6.1[Laser Equipment Co, Ltd. www.laser.com]--Z:\olrx\PUISSANCE LASER.FTP</h1>
          <div className="flex items-center gap-[35px] pr-5">
            <button aria-label="Minimize"><svg width="10" height="10" viewBox="0 0 10 10" stroke="#999" shapeRendering="crispEdges"><path d="M0 5.500h10" /></svg></button>
            <button aria-label="Restore"><svg width="10" height="10" viewBox="0 0 10 10" fill="none" stroke="#999" shapeRendering="crispEdges"><path d="M.5 2.500h7v7h-7zM2.500 2V.5h7v7H8" /></svg></button>
            <button aria-label="Close"><svg width="10" height="10" viewBox="0 0 10 10" stroke="#999"><path d="M0 0l10 10M10 0L0 10" /></svg></button>
          </div>
        </div>
        <nav className="flex h-[22px] items-center gap-[13px] border-b border-[#a0a0a0] pl-[7px] text-[#6d6d6d]">
          {["File(F)", "Edit(E)", "Draw(D)", "Tool", "View(V)", "Help(H)"].map((m) => (
            <button key={m}>{m}</button>
          ))}
        </nav>
      </header>

      <div className="flex h-[25px] items-center border-t border-white pb-px">
        <span className="mr-px ml-1 h-6 w-px bg-[#a0a0a0]" />
        <ToolRow tools={FILE_TOOLS} pressed="Pick" />
        <span className="h-6 w-px bg-[#a0a0a0]" />
      </div>

      <div className="flex flex-1">
        <div className="w-[30px] border-t border-[#a0a0a0]">
          <div className="flex flex-col items-center border-r border-b border-[#a0a0a0] pt-[5px] pb-[7px]">
            {DRAW_TOOLS.map((t, i) =>
              t ? (
                <button key={i} aria-label={t[0]} className="flex h-[23px] items-center">
                  <Icon>{t[1]}</Icon>
                </button>
              ) : (
                <span key={i} className="my-[3px] h-[2px] w-[19px] border-t border-[#a0a0a0] bg-white" />
              )
            )}
          </div>
        </div>
        <main className="relative flex-1 overflow-hidden border-t border-l border-[#696969] bg-[#d2ffff]">
          <Drawing />
          <FileDialog />
        </main>
        <SidePanel />
      </div>

      <div className="flex h-[30px] items-center border-t border-[#a0a0a0] shadow-[inset_0_1px_#fff]">
        <span className="w-[5px]" />
        <ToolRow tools={ALIGN_TOOLS} sep="mx-[3px]" />
        <span className="mr-[11px] ml-[7px] h-[28px] w-px bg-[#a0a0a0]" />
        <div className="flex gap-2">
          {PALETTE.map((c, i) => (
            <button key={i} aria-label={`Colour ${c}`} className="h-[14px] w-[15px]" style={{ background: c }} />
          ))}
        </div>
        <span className="ml-[10px] h-[28px] w-px bg-[#a0a0a0]" />
      </div>

      <div className={`flex h-[21px] gap-[2px] border-t border-[#a0a0a0] pt-[3px] pb-px text-[12px] leading-[15px] ${UI}`}>
        <div className="w-[89px] border-t border-r border-l border-t-[#a0a0a0] border-r-white border-l-[#a0a0a0]" />
        <div className="w-[541px] border-t border-r border-l border-t-[#a0a0a0] border-r-white border-l-[#a0a0a0] pl-px">
          X=945.763 Y=355.730 Selected:36
        </div>
        <div className="flex-1 border-t border-r border-l border-t-[#a0a0a0] border-r-white border-l-[#a0a0a0] text-center font-['Liberation_Sans',Arial,sans-serif] text-[13px] font-bold text-[#00ff00]">
          Communication success!
        </div>
        <div className="w-[582px] border-t border-r border-l border-t-[#a0a0a0] border-r-white border-l-[#a0a0a0] pl-px">
          0 PrintFiles
        </div>
      </div>

      <Taskbar />
    </div>
  );
}
